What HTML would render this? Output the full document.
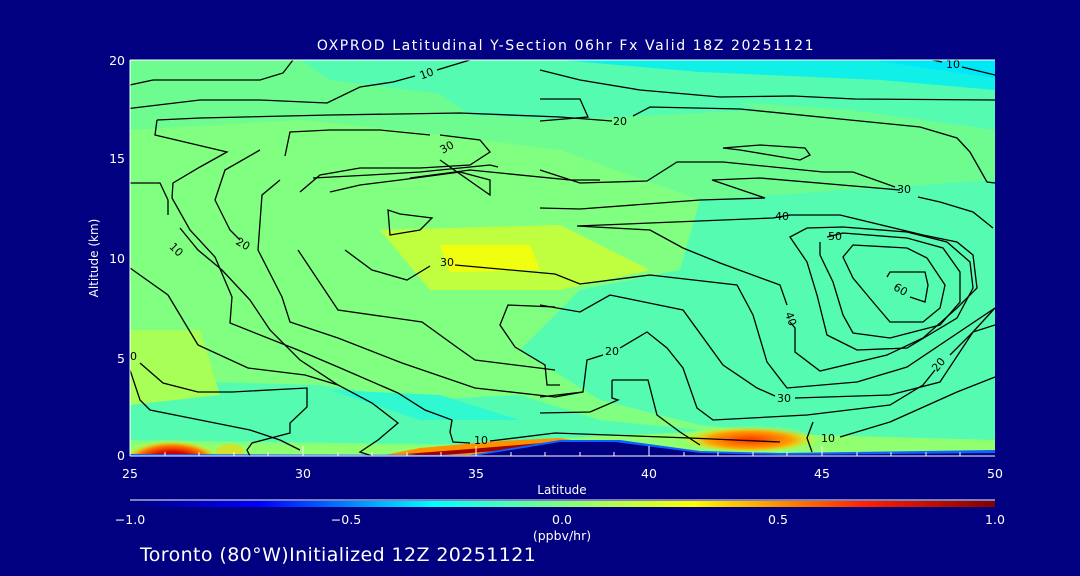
<!DOCTYPE html>
<html><head><meta charset="utf-8"><style>
html,body{margin:0;padding:0;background:#000080;}
svg{display:block}
text{font-family:"DejaVu Sans","Liberation Sans",sans-serif;fill:#fff}
.c text{fill:#000;stroke:none}
</style></head><body>
<svg width="1080" height="576" viewBox="0 0 1080 576" xmlns="http://www.w3.org/2000/svg">
<defs>
<linearGradient id="cb" x1="0" x2="1">
<stop offset="0" stop-color="#000080"/>
<stop offset="0.15" stop-color="#0000ff"/>
<stop offset="0.35" stop-color="#00ffff"/>
<stop offset="0.5" stop-color="#7fff7f"/>
<stop offset="0.65" stop-color="#ffff00"/>
<stop offset="0.85" stop-color="#ff2000"/>
<stop offset="1" stop-color="#800000"/>
</linearGradient>
<radialGradient id="hot" cx="0.5" cy="0.75" r="0.55">
<stop offset="0" stop-color="#900000"/><stop offset="0.45" stop-color="#d80000"/><stop offset="0.75" stop-color="#ff8000"/><stop offset="1" stop-color="#ffff00" stop-opacity="0"/>
</radialGradient>
<radialGradient id="org" cx="0.5" cy="0.6" r="0.5">
<stop offset="0" stop-color="#ff3000"/><stop offset="0.6" stop-color="#ffa000"/><stop offset="1" stop-color="#ffff00" stop-opacity="0"/>
</radialGradient>
<clipPath id="pc"><rect x="130" y="60" width="865" height="396"/></clipPath>
</defs>
<rect width="1080" height="576" fill="#000080"/>
<g clip-path="url(#pc)">
<rect x="130" y="60" width="865" height="396" fill="#80ff80"/>
<polygon points="130,60 995,60 995,250 900,260 780,230 700,200 560,150 400,130 300,120 130,130" fill="#6efc90"/>
<polygon points="300,60 995,60 995,130 850,110 700,100 550,95 450,95 330,80" fill="#55fbb0"/>
<polygon points="420,80 540,90 700,90 760,110 560,120 470,115" fill="#55fbb0"/>
<polygon points="560,60 995,60 995,90 880,80 700,72" fill="#10f0e8"/>
<polygon points="870,60 995,60 995,78" fill="#00e8f8"/>
<polygon points="700,200 995,180 995,440 850,440 700,425 600,400 520,350 580,290 680,270" fill="#55fbb0"/>
<polygon points="130,380 320,385 420,400 520,395 600,420 700,430 600,445 500,445 130,440" fill="#55fbb0"/>
<polygon points="330,390 440,395 520,420 420,420" fill="#30f8d0"/>
<polygon points="380,230 560,225 650,270 560,290 430,290" fill="#c0ff40"/>
<polygon points="440,245 530,245 540,270 450,272" fill="#f0ff10"/>
<polygon points="130,330 200,330 220,395 130,405" fill="#a8ff58"/>
<polygon points="130,444 450,446 600,436 700,432 850,436 995,440 995,456 130,456" fill="#90ff70"/>
<ellipse cx="172" cy="452" rx="46" ry="20" fill="url(#hot)"/>
<ellipse cx="230" cy="452" rx="14" ry="8" fill="#ffd000" opacity="0.6"/>
<ellipse cx="750" cy="437" rx="70" ry="14" fill="url(#org)"/>
<polygon points="380,456 420,448 500,441 560,438 600,445 560,452 450,456" fill="#ff9000"/>
<polygon points="405,454 470,449 530,444 565,441 560,446 470,453 430,456" fill="#a00000"/>
<path d="M130,454 L470,455 L560,440 L620,440 L700,451 L780,453 L995,450 L995,456 L130,456 Z" fill="#1060ff"/>
<path d="M474,456 L560,442 L615,442 L700,453 L780,455 L995,453 L995,456 Z" fill="#000080"/>
<g class="c" fill="none" stroke="#000" stroke-width="1.3">
<path d="M125,86 L153,80 L260,80 L283,73 L293,60 L303,58"/>
<path d="M125,109 L200,100 L260,100 L327,103 L360,87 L393,82 L415,76 M437,70 L450,66 L470,60"/>
<path d="M157,120 L200,118 L330,115 L460,113 L560,117 L612,121 M633,116 L650,107 L740,109 L920,127 L957,138 L970,152 L987,182 L995,183"/>
<path d="M540,70 L580,80 L640,90 L720,97 L793,96 L855,99 L995,100"/>
<path d="M923,58 L942,62 M962,67 L995,75"/>
<path d="M540,99 L580,99 L588,117 L540,121"/>
<path d="M157,120 L155,135 L227,152 L200,167 L173,183 L172,198 L190,230 L215,257 L232,297 L230,323 L298,350 L338,367 L398,393 L425,410 L452,420 L450,432 L453,442 L470,443 M490,441 L555,433 L690,438 L780,442 M840,437 L890,422 L957,392 L995,377"/>
<path d="M125,183 L160,183 L168,200 L168,215 M180,228 L198,250 L222,270 L250,300 L270,330 L300,360 L338,385 L372,403 L398,423 L378,440 L360,452 L372,456"/>
<path d="M130,268 L168,295 L198,345 L248,368 L305,375 L338,385"/>
<path d="M280,180 L262,195 L258,250 L282,297 L290,322 L338,338 L402,363 L475,388 L555,397 L583,392 L587,360 L603,355 M620,348 L647,332 L667,348 L683,368 L697,408 L713,420 L807,415 L890,405 L923,385 L935,370 M950,355 L973,332 L995,308"/>
<path d="M300,192 L320,175 L360,168 L420,168 L470,165 L490,152 L480,140 L440,135 M430,135 L380,130 L330,130 L290,132 L285,156"/>
<path d="M298,250 L338,310 L422,322 L458,348 L475,360 L555,370"/>
<path d="M240,240 L230,230 L215,200 L225,170 L260,150"/>
<path d="M345,250 L372,270 L407,280 L430,266 M455,265 L555,274 L580,284 L650,275 L737,285 L753,315 L767,362 L787,388 L857,382 L907,367 L995,308"/>
<path d="M313,178 L370,175 L420,172 L490,165 L498,167 M410,178 L440,174 L470,170 L570,180 L600,180"/>
<path d="M330,192 L360,185 L400,180 L460,172 L490,180 L490,195 L440,160"/>
<path d="M388,210 L390,235 L420,230 L432,218 L400,214 Z"/>
<path d="M555,307 L508,305 L500,325 L515,347 L545,365 L547,385 L560,385"/>
<path d="M540,305 L580,312 L610,295 L683,310 L723,365 L757,388 L775,396 M795,398 L890,395 L940,382 L973,332 L995,325"/>
<path d="M540,397 L583,392"/>
<path d="M612,380 L648,380 L657,415 L680,432 L700,445"/>
<path d="M612,380 L612,398 L618,400 L590,412 L540,413"/>
<path d="M813,422 L807,438 L812,452"/>
<path d="M540,170 L580,183 L647,181 L677,162 L723,162 L823,172 L853,172 L895,187 M918,197 L940,202 L973,212 L993,228"/>
<path d="M540,208 L580,209 L700,200 L765,198 L712,180 L760,178 L900,190"/>
<path d="M723,148 L760,145 L805,148 L810,155 L800,160 L770,155 L740,150 Z"/>
<path d="M577,226 L650,230 L683,248 L720,263 L780,285 L787,305 M790,322 L795,328 L795,352 L820,371 L887,355 L923,338 L957,308 L977,288 L973,255 L957,242 L923,235 L840,215 L790,215 L773,218 L577,226"/>
<path d="M790,237 L807,262 L817,295 L827,335 L857,350 L907,348 L957,318 L973,288 L970,262 L947,242 L907,232 L843,227 L807,228 Z"/>
<path d="M820,242 L820,255 L833,282 L843,315 L853,333 L890,338 L940,325 L960,302 L960,272 L943,248 L907,238 L843,233 L827,237"/>
<path d="M843,257 L853,245 L907,248 L927,258 L945,285 L940,308 L923,322 L890,322 L873,302 L853,278 Z"/>
<path d="M887,277 L890,272 L925,272 L928,285 L925,302 L910,297"/>
<path d="M130,370 L140,400 L150,410 L200,420 L250,430 L280,440 L300,450"/>
<path d="M140,363 L163,383 L198,392 L232,392 L307,388 L307,407 L290,423 L290,433 L252,443 L247,450 L252,460"/>
<text x="420" y="78" font-size="11" transform="rotate(-20 425 75)">10</text>
<text x="613" y="125" font-size="11">20</text>
<text x="440" y="152" font-size="11" transform="rotate(-30 445 148)">30</text>
<text x="236" y="246" font-size="11" transform="rotate(30 240 243)">20</text>
<text x="170" y="252" font-size="11" transform="rotate(45 175 248)">10</text>
<text x="440" y="266" font-size="11">30</text>
<text x="946" y="68" font-size="11">10</text>
<text x="897" y="193" font-size="11">30</text>
<text x="775" y="220" font-size="11">40</text>
<text x="828" y="240" font-size="11">50</text>
<text x="893" y="292" font-size="11" transform="rotate(30 898 290)">60</text>
<text x="786" y="320" font-size="11" transform="rotate(70 790 316)">40</text>
<text x="605" y="355" font-size="11">20</text>
<text x="777" y="402" font-size="11">30</text>
<text x="932" y="370" font-size="11" transform="rotate(-50 937 366)">20</text>
<text x="130" y="360" font-size="11">0</text>
<text x="474" y="444" font-size="11">10</text>
<text x="821" y="442" font-size="11">10</text>
</g>
</g>
<line x1="130" y1="60" x2="995" y2="60" stroke="#fff"/>
<line x1="130" y1="60" x2="130" y2="456" stroke="#fff"/>
<line x1="130" y1="456" x2="995" y2="456" stroke="#fff"/>
<g stroke="#fff">
<line x1="303" y1="456" x2="303" y2="446"/><line x1="476" y1="456" x2="476" y2="446"/>
<line x1="649" y1="456" x2="649" y2="446"/><line x1="822" y1="456" x2="822" y2="446"/>
<path d="M165,456v-4M199,456v-4M234,456v-4M268,456v-4M338,456v-4M372,456v-4M407,456v-4M441,456v-4M511,456v-4M545,456v-4M580,456v-4M614,456v-4M684,456v-4M718,456v-4M753,456v-4M787,456v-4M857,456v-4M891,456v-4M926,456v-4M960,456v-4"/>
</g>
<g font-size="12.5">
<text x="566" y="50" text-anchor="middle" font-size="14" letter-spacing="1.6">OXPROD Latitudinal Y-Section 06hr  Fx Valid 18Z 20251121</text>
<text x="125" y="65" text-anchor="end">20</text>
<text x="125" y="163" text-anchor="end">15</text>
<text x="125" y="263" text-anchor="end">10</text>
<text x="125" y="363" text-anchor="end">5</text>
<text x="125" y="460" text-anchor="end">0</text>
<text x="130" y="478" text-anchor="middle">25</text>
<text x="303" y="478" text-anchor="middle">30</text>
<text x="476" y="478" text-anchor="middle">35</text>
<text x="649" y="478" text-anchor="middle">40</text>
<text x="822" y="478" text-anchor="middle">45</text>
<text x="995" y="478" text-anchor="middle">50</text>
<text x="562" y="494" text-anchor="middle" font-size="12">Latitude</text>
<text x="98" y="258" text-anchor="middle" font-size="12" transform="rotate(-90 98 258)">Altitude (km)</text>
<text x="130" y="524" text-anchor="middle">−1.0</text>
<text x="346" y="524" text-anchor="middle">−0.5</text>
<text x="562" y="524" text-anchor="middle">0.0</text>
<text x="778" y="524" text-anchor="middle">0.5</text>
<text x="995" y="524" text-anchor="middle">1.0</text>
<text x="562" y="540" text-anchor="middle">(ppbv/hr)</text>
<text x="140" y="561" font-size="19" letter-spacing="0.4">Toronto (80°W)Initialized 12Z 20251121</text>
</g>
<line x1="130" y1="500" x2="995" y2="500" stroke="#fff"/>
<rect x="130" y="501" width="865" height="6" fill="url(#cb)"/>
</svg>
</body></html>
